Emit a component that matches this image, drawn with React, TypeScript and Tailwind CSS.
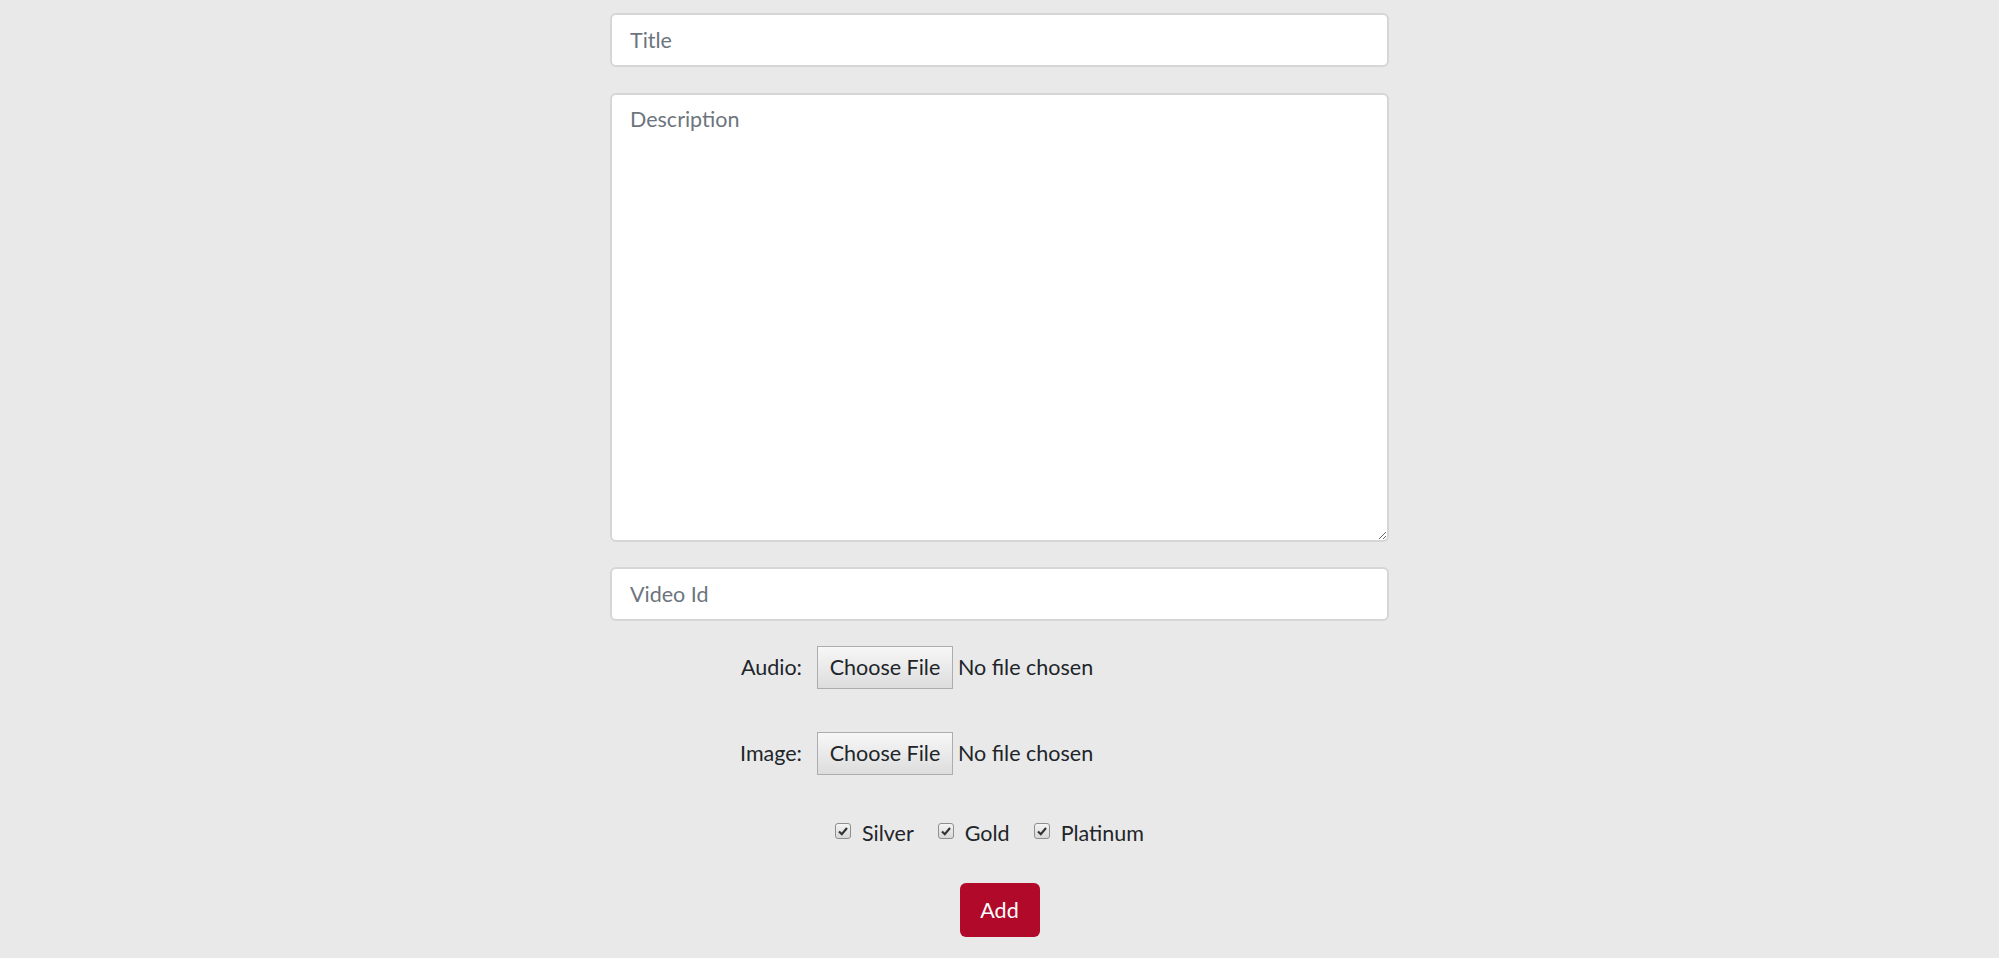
export default function App() {
  return (
    <div className="min-h-screen bg-[#e9e9e9] font-['Lato','Open_Sans',sans-serif] text-[#212529]">
      <form className="mx-auto flex w-[779px] flex-col pt-[13px]" onSubmit={(e) => e.preventDefault()}>
        <input
          type="text"
          placeholder="Title"
          className="h-[54px] w-full rounded-[6px] border-2 border-[#d6d6d9] bg-white px-[18px] text-[21.5px] outline-none placeholder:text-[#6c757d]"
        />
        <textarea
          placeholder="Description"
          className="mt-[26px] h-[449px] w-full rounded-[6px] border-2 border-[#d6d6d9] bg-white px-[18px] py-[8px] text-[21.5px] outline-none placeholder:text-[#6c757d]"
        />
        <input
          type="text"
          placeholder="Video Id"
          className="mt-[25px] h-[54px] w-full rounded-[6px] border-2 border-[#d6d6d9] bg-white px-[18px] text-[21.5px] outline-none placeholder:text-[#6c757d]"
        />

        <div className="mt-[25px] flex items-center text-[21.5px]">
          <label className="w-[192px] text-right">Audio:</label>
          <div className="ml-[15px] flex items-center">
            <button
              type="button"
              className="h-[43px] w-[136px] border border-[#adadad] bg-gradient-to-b from-[#f7f7f7] to-[#dddddd] text-[21.5px]"
            >
              Choose File
            </button>
            <span className="ml-[5px]">No file chosen</span>
          </div>
        </div>

        <div className="mt-[43px] flex items-center text-[21.5px]">
          <label className="w-[192px] text-right">Image:</label>
          <div className="ml-[15px] flex items-center">
            <button
              type="button"
              className="h-[43px] w-[136px] border border-[#adadad] bg-gradient-to-b from-[#f7f7f7] to-[#dddddd] text-[21.5px]"
            >
              Choose File
            </button>
            <span className="ml-[5px]">No file chosen</span>
          </div>
        </div>

        <div className="mt-[42px] flex justify-center pl-[4px] text-[21.5px]">
          {['Silver', 'Gold', 'Platinum'].map((tier) => (
            <label key={tier} className="mr-[24px] flex items-center">
              <span className="mb-[4px] flex h-[16px] w-[16px] shrink-0 items-center justify-center rounded-[3px] border border-[#8e8e8e] bg-gradient-to-b from-[#f4f4f4] to-[#d8d8d8]">
                <svg viewBox="0 0 12 12" className="h-[12px] w-[12px]">
                  <path d="M2 6.5 L4.8 9.2 L10 3" fill="none" stroke="#333" strokeWidth="2.2" />
                </svg>
              </span>
              <span className="ml-[11px]">{tier}</span>
            </label>
          ))}
        </div>

        <div className="mt-[34px] flex justify-center">
          <button type="submit" className="h-[54px] w-[80px] rounded-[6px] bg-[#b0092a] text-[21.5px] text-white">
            Add
          </button>
        </div>
      </form>
    </div>
  )
}
